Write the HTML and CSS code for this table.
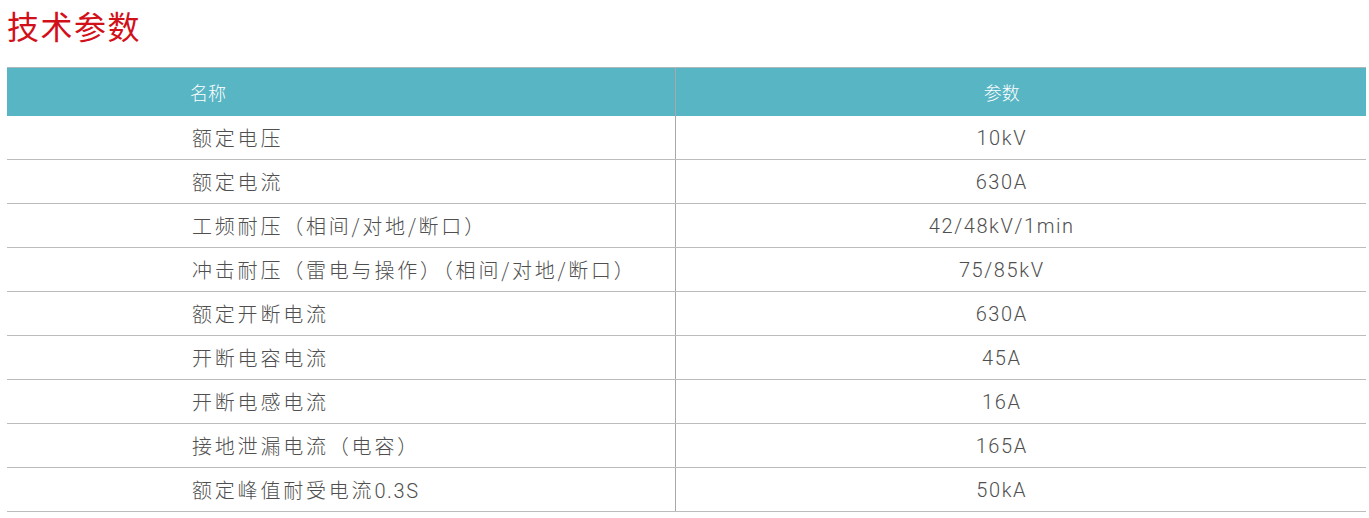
FILE: index.html
```html
<!DOCTYPE html>
<html lang="zh-CN">
<head>
<meta charset="utf-8">
<title>技术参数</title>
<link rel="stylesheet" href="styles.css">
</head>
<body>
<div class="page">
  <h2 class="title">技术参数</h2>
  <table class="spec">
    <thead>
      <tr><th class="name">名称</th><th class="val">参数</th></tr>
    </thead>
    <tbody>
      <tr><td class="name">额定电压</td><td class="val">10kV</td></tr>
      <tr><td class="name">额定电流</td><td class="val">630A</td></tr>
      <tr><td class="name">工频耐压（相间/对地/断口）</td><td class="val">42/48kV/1min</td></tr>
      <tr><td class="name">冲击耐压（雷电与操作）（相间/对地/断口）</td><td class="val">75/85kV</td></tr>
      <tr><td class="name">额定开断电流</td><td class="val">630A</td></tr>
      <tr><td class="name">开断电容电流</td><td class="val">45A</td></tr>
      <tr><td class="name">开断电感电流</td><td class="val">16A</td></tr>
      <tr><td class="name">接地泄漏电流（电容）</td><td class="val">165A</td></tr>
      <tr><td class="name">额定峰值耐受电流<span class="num">0.3S</span></td><td class="val">50kA</td></tr>
    </tbody>
  </table>
</div>
</body>
</html>
```

FILE: styles.css
```css
html, body {
  margin: 0;
  padding: 0;
  background: #ffffff;
}
.page {
  padding: 0 3px 0 7px;
  font-family: Roboto, "Noto Sans CJK SC", sans-serif;
}
.title {
  margin: 0;
  padding-top: 5px;
  height: 67px;
  box-sizing: border-box;
  font-family: "Noto Sans CJK SC", sans-serif;
  font-weight: 400;
  font-size: 32px;
  line-height: 40px;
  color: #d2101a;
  letter-spacing: 1.5px;
}
.spec {
  width: 1359px;
  border-collapse: collapse;
  table-layout: fixed;
}
.spec th {
  background: #58b5c4;
  color: #ffffff;
  font-family: "Noto Sans CJK SC", sans-serif;
  font-weight: 300;
  font-size: 18px;
  height: 48px;
  padding: 0;
  border-top: 1px solid #a9b9bc;
}
.spec td {
  height: 43px;
  padding: 0;
  color: #4f4f4f;
  font-family: Roboto, "Noto Sans CJK SC", sans-serif;
  font-weight: 300;
  font-size: 20px;
  letter-spacing: 1.6px;
  border-bottom: 1px solid #bcbcbc;
}
.spec .name {
  width: 668px;
  text-align: left;
  padding-left: 185px;
  box-sizing: border-box;
}
.spec th.name {
  padding-left: 183px;
}
.spec .val {
  text-align: center;
  padding-right: 38px;
  border-left: 1px solid #a8a8a8;
}
.spec td.name {
  font-family: "Noto Sans CJK SC", sans-serif;
  font-weight: 300;
  letter-spacing: 2.8px;
}
.spec td.name .num {
  font-family: Roboto, sans-serif;
  font-weight: 300;
  letter-spacing: 1.6px;
}
```
